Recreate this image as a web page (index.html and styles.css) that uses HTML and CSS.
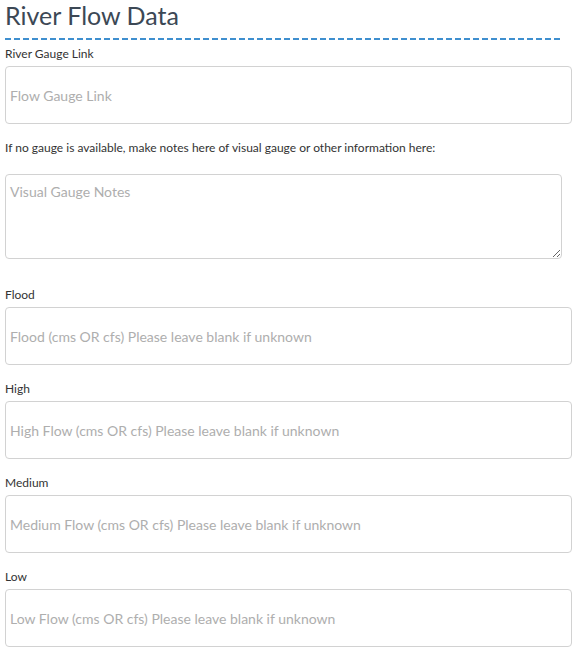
FILE: index.html
```html
<!DOCTYPE html>
<html lang="en">
<head>
    <meta charset="UTF-8">
    <meta name="viewport" content="width=device-width, initial-scale=1.0">
    <title>River Flow Data</title>
    <link rel="stylesheet" href="styles.css">
</head>
<body>
    <form class="flow-form">
        <h2 class="section-title">River Flow Data</h2>
        <div class="section-rule"></div>

        <div class="form-group first">
            <label for="gauge-link">River Gauge Link</label>
            <input type="text" id="gauge-link" placeholder="Flow Gauge Link">
        </div>

        <div class="form-group notes">
            <label for="gauge-notes">If no gauge is available, make notes here of visual gauge or other information here:</label>
            <textarea id="gauge-notes" placeholder="Visual Gauge Notes"></textarea>
        </div>

        <div class="form-group after-notes">
            <label for="flood">Flood</label>
            <input type="text" id="flood" placeholder="Flood (cms OR cfs) Please leave blank if unknown">
        </div>

        <div class="form-group">
            <label for="high">High</label>
            <input type="text" id="high" placeholder="High Flow (cms OR cfs) Please leave blank if unknown">
        </div>

        <div class="form-group">
            <label for="medium">Medium</label>
            <input type="text" id="medium" placeholder="Medium Flow (cms OR cfs) Please leave blank if unknown">
        </div>

        <div class="form-group">
            <label for="low">Low</label>
            <input type="text" id="low" placeholder="Low Flow (cms OR cfs) Please leave blank if unknown">
        </div>
    </form>
</body>
</html>
```

FILE: styles.css
```css
body {
    font-family: Lato, 'Liberation Sans', sans-serif;
    margin: 0;
    padding: 0 11px 0 5px;
    background: #fff;
    color: #222;
}
.flow-form {
    display: flex;
    flex-direction: column;
}
.section-title {
    font-size: 25px;
    font-weight: 400;
    line-height: 30px;
    color: #3c4855;
    margin: 0;
}
.section-rule {
    height: 2px;
    width: 558px;
    margin-top: 8px;
    background: repeating-linear-gradient(to right, #3f8fcf 0, #3f8fcf 6px, transparent 6px, transparent 9px);
}
.form-group {
    display: flex;
    flex-direction: column;
}
.form-group label {
    font-size: 12px;
    line-height: 18px;
    margin-top: 15px;
    margin-bottom: 3px;
    color: #333;
}
.form-group.first label {
    margin-top: 5px;
}
.form-group.notes label {
    margin-bottom: 17px;
}
.form-group.after-notes label {
    margin-top: 27px;
}
.form-group input,
.form-group textarea {
    box-sizing: border-box;
    font-family: Lato, 'Liberation Sans', sans-serif;
    font-size: 14px;
    color: #333;
    border: 1px solid #d2d2d2;
    border-radius: 4px;
    padding: 0 4px;
    margin: 0;
    outline: none;
}
.form-group input {
    height: 58px;
    width: 100%;
}
.form-group textarea {
    height: 85px;
    width: 557px;
    padding-top: 8px;
    line-height: 18px;
}
::placeholder {
    color: #aeaeae;
    opacity: 1;
}
```
